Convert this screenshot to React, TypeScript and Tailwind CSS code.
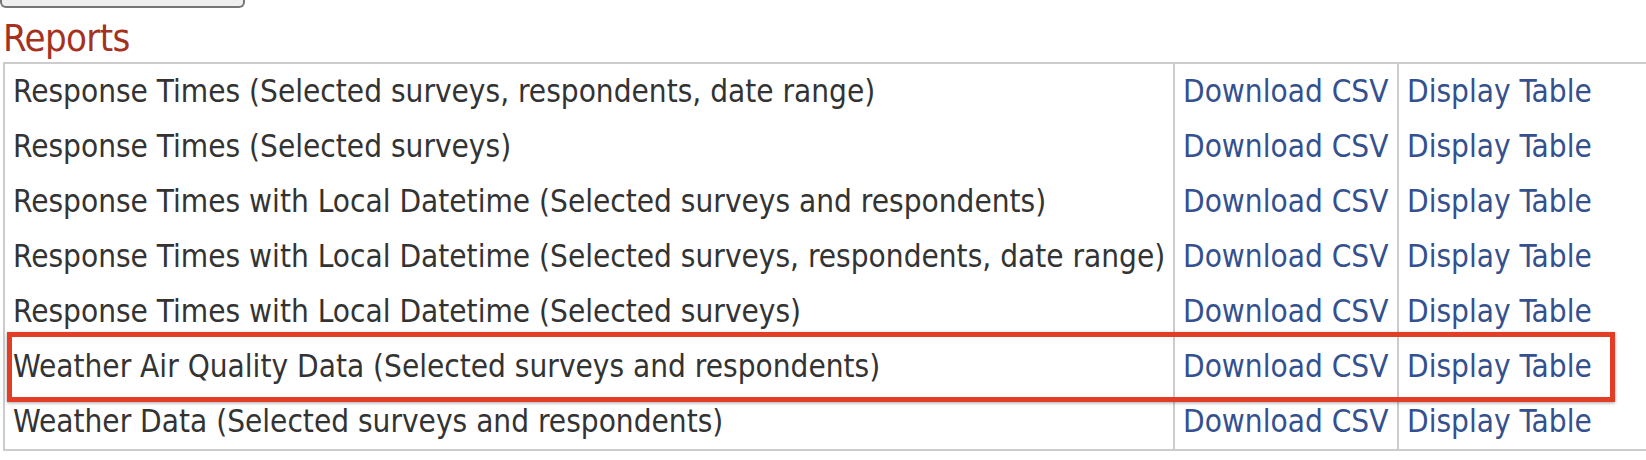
import React from "react";

const rows = [
  "Response Times (Selected surveys, respondents, date range)",
  "Response Times (Selected surveys)",
  "Response Times with Local Datetime (Selected surveys and respondents)",
  "Response Times with Local Datetime (Selected surveys, respondents, date range)",
  "Response Times with Local Datetime (Selected surveys)",
  "Weather Air Quality Data (Selected surveys and respondents)",
  "Weather Data (Selected surveys and respondents)",
];

export default function App() {
  return (
    <div
      className="w-[1646px] h-[460px] overflow-hidden bg-white"
      style={{ fontFamily: '"DejaVu Sans Condensed", "DejaVu Sans", sans-serif' }}
    >
      <div className="w-[245px] h-[8px] bg-[#efefef] border-2 border-t-0 border-[#767676] rounded-b-[6px]" />
      <h2 className="ml-[3px] mt-[6px] h-[48px] text-[38px] leading-[48px] text-[#a5311f] tracking-[-0.6px]">
        Reports
      </h2>
      <div className="relative ml-[3px] w-[1700px]">
        <table className="border-collapse border-2 border-[#cccccc] text-[31.25px] leading-[55px]">
          <tbody>
            {rows.map((r, i) => (
              <tr key={i} className="h-[55px]">
                <td className="w-[1170px] pl-[8px] text-[#333333] whitespace-nowrap">{r}</td>
                <td className="w-[224px] pl-[8px] border-x-2 border-[#cccccc] text-[#34508f] whitespace-nowrap">
                  Download CSV
                </td>
                <td className="w-[300px] pl-[8px] text-[#34508f] whitespace-nowrap">Display Table</td>
              </tr>
            ))}
          </tbody>
        </table>
        <div className="absolute left-[4px] top-[270px] w-[1608px] h-[70px] border-[5px] border-[#e23d26] shadow-[0_1px_3px_rgba(0,0,0,0.35)] pointer-events-none" />
      </div>
    </div>
  );
}
